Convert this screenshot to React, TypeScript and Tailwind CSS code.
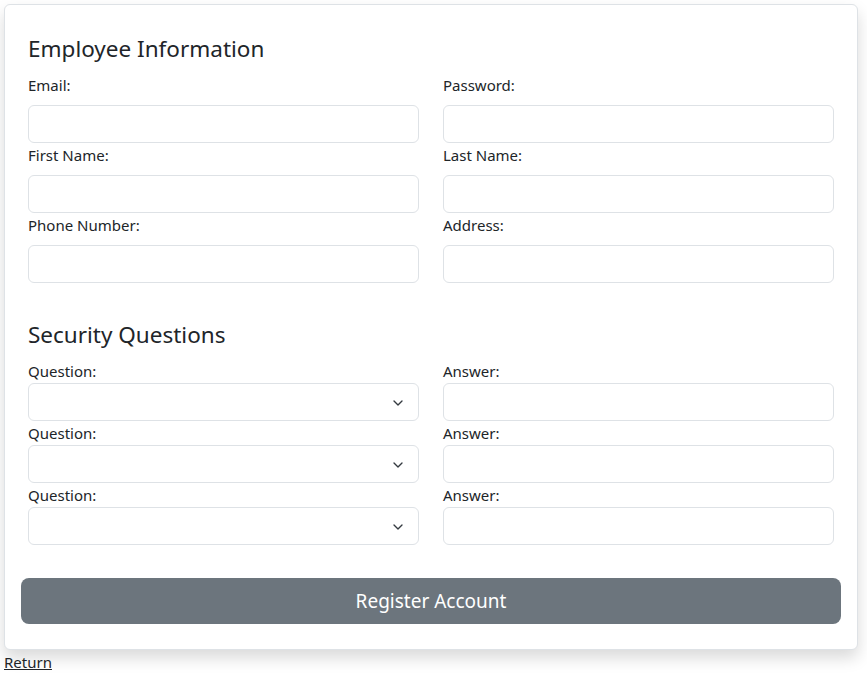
import { ChevronDown } from "lucide-react";

const font = { fontFamily: '"Segoe UI", "Noto Sans", sans-serif' };

function Field({ label, tight = false, select = false }: { label: string; tight?: boolean; select?: boolean }) {
  return (
    <div className="flex flex-col">
      <label className={tight ? "h-6 leading-6 text-[15px]" : "h-6 leading-6 mb-2 text-[15px]"}>{label}</label>
      {select ? (
        <div className="relative h-[38px] rounded-md border border-[#dee2e6] bg-white">
          <ChevronDown className="absolute right-[12px] top-[11px] size-4 text-[#343a40]" strokeWidth={2} />
        </div>
      ) : (
        <input className="h-[38px] rounded-md border border-[#dee2e6] bg-white px-3 outline-none" />
      )}
    </div>
  );
}

export default function App() {
  return (
    <div className="min-h-[681px] bg-white pt-[4px] pl-[4px] text-[#212529]" style={font}>
      <div className="w-[854px] rounded-md border border-[#dee2e6] bg-white p-4 shadow-[0_8px_16px_rgba(0,0,0,0.15)]">
        <div className="px-[7px]">
          <h4 className="mt-[15px] mb-3 text-[22.5px] leading-[25px]">Employee Information</h4>
          <div className="grid grid-cols-2 gap-x-6">
            <Field label="Email:" />
            <Field label="Password:" />
            <Field label="First Name:" />
            <Field label="Last Name:" />
            <Field label="Phone Number:" />
            <Field label="Address:" />
          </div>
          <h4 className="mt-[39px] mb-3 text-[22.5px] leading-[25px]">Security Questions</h4>
          <div className="grid grid-cols-2 gap-x-6">
            <Field label="Question:" tight select />
            <Field label="Answer:" tight />
            <Field label="Question:" tight select />
            <Field label="Answer:" tight />
            <Field label="Question:" tight select />
            <Field label="Answer:" tight />
          </div>
        </div>
        <button className="mt-[33px] mb-[9px] flex h-[46px] w-full items-center justify-center rounded-lg bg-[#6c757d] text-[19px] text-white">
          Register Account
        </button>
      </div>
      <a href="#" className="text-[15px] leading-6 text-[#212529] underline">
        Return
      </a>
    </div>
  );
}
